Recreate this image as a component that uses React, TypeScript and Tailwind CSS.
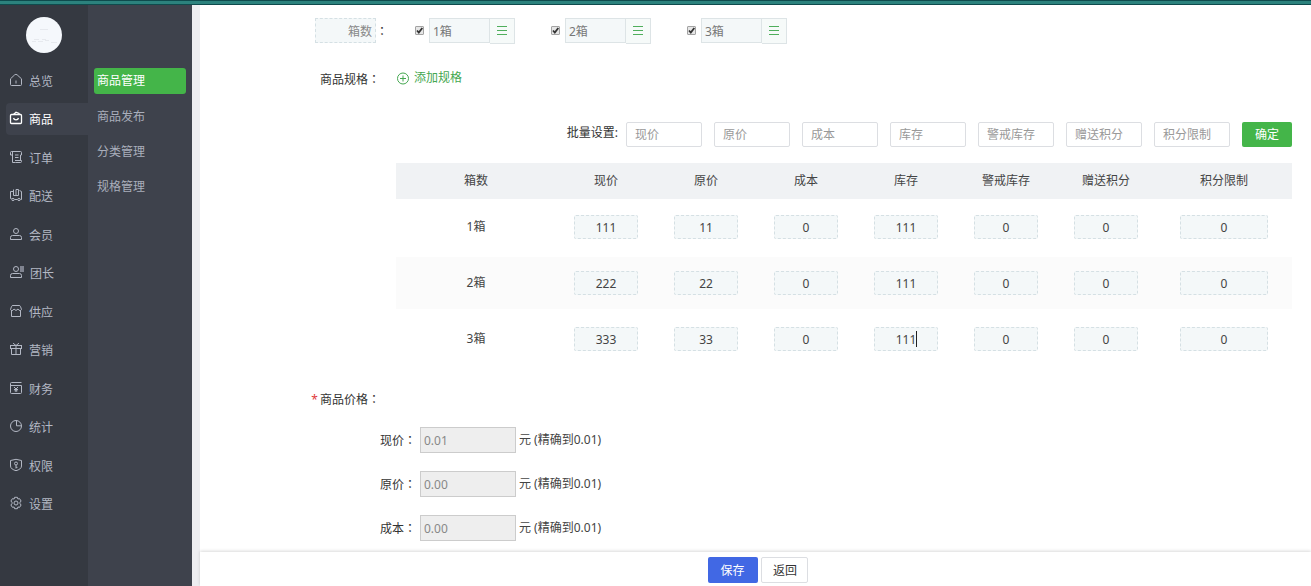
import React, { useState } from "react";

const icons: Record<string, React.ReactNode> = {
  home: (
    <>
      <path d="M2.5 12.5h9a1 1 0 0 0 1-1V5.8L8.2 1.9a2 2 0 0 0-2.6 0L1.5 5.8v5.7a1 1 0 0 0 1 1z" />
      <path d="M7 7.5v3" />
    </>
  ),
  goods: (
    <>
      <path strokeWidth="1.3" d="M4.5 3.5 7 1.2l3 1.2v1.1" />
      <rect strokeWidth="1.3" x="1.5" y="3.5" width="11" height="9" rx="1" />
      <path strokeWidth="1.3" d="M4.5 7c.6 2.4 4.4 2.4 5 0" />
    </>
  ),
  order: (
    <>
      <path d="M3.5 5h-2V2.500a1 1 0 0 1 1-1h9a1 1 0 0 1 1 1V5h-1M3.500 1.500v11h3M6 5h3.500M6 7.500h3.500" />
      <path d="M6 10.500h6.500v1a1 1 0 0 1-1 1h-5M11.500 5v5.500" />
    </>
  ),
  delivery: (
    <>
      <path d="M4.500 3.500h-3v7h1M5.500 11.500h3M11.500 11.500h1v-8l-2-1" />
      <path d="M4.500 1.500v6h5v-6M7 1.500v6M7 1.500h2.500" />
      <circle cx="4" cy="11.5" r="1.2" />
      <circle cx="10" cy="11.5" r="1.2" />
    </>
  ),
  member: (
    <>
      <circle cx="7" cy="4" r="2.5" />
      <path d="M1.5 12.5v-2a2 2 0 0 1 2-2h7a2 2 0 0 1 2 2v2z" />
    </>
  ),
  leader: (
    <>
      <circle cx="7" cy="4" r="2.5" />
      <path d="M1.5 12.5v-2a2 2 0 0 1 2-2h7a2 2 0 0 1 2 2v2z" />
      <rect x="11" y="1" width="4" height="6" fill="currentColor" fillOpacity="0.6" stroke="none" />
    </>
  ),
  supply: (
    <>
      <path d="M2.500 6.500v6h9v-6M1.500 5.500l1-3a1.500 1.500 0 0 1 1.500-1h6a1.500 1.500 0 0 1 1.500 1l1 3" />
      <path d="M1.500 5.500c.5 1.500 2.500 1.500 3.500-.5l2 1.500L9 5c1 2 3 2 3.500.5" />
    </>
  ),
  gift: (
    <>
      <rect x="1.5" y="3.5" width="11" height="3" />
      <path d="M2.5 6.5v6h9v-6M7 3.5v9M4 1.2l3 2.3 3-2.3" />
    </>
  ),
  finance: (
    <>
      <path d="M12.5 1.5h-10a1 1 0 0 0-1 1v9a1 1 0 0 0 1 1h9a1 1 0 0 0 1-1v-7h-11" />
      <path d="M5 6l2 2 2-2M5 8.5h4M7 8v3M5.5 9.8h3" />
    </>
  ),
  stats: (
    <>
      <circle cx="7" cy="7" r="5.5" />
      <path d="M7.5 1.5v5.3h5" />
    </>
  ),
  auth: (
    <>
      <path d="M1.5 2.5 7 1.3l5.5 1.2V8c0 2.5-2.5 3.8-5.5 4.7C4 11.8 1.5 10.5 1.5 8z" />
      <circle cx="7" cy="5.5" r="1.5" />
      <path d="M7 7v3.5M7 9.3h1.5" />
    </>
  ),
  setting: (
    <>
      <path d="M5.6 1.3h2.8l.5 1.7 1.7-.3 1.5 2.3L11 6.4v1.2L12.1 9l-1.5 2.3-1.7-.3-.5 1.7H5.6L5.1 11l-1.7.3L1.9 9 3 7.6V6.4L1.9 5l1.5-2.3 1.7.3z" />
      <circle cx="7" cy="7" r="2" />
    </>
  ),
};

const menu = [
  { icon: "home", label: "总览" },
  { icon: "goods", label: "商品" },
  { icon: "order", label: "订单" },
  { icon: "delivery", label: "配送" },
  { icon: "member", label: "会员" },
  { icon: "leader", label: "团长" },
  { icon: "supply", label: "供应" },
  { icon: "gift", label: "营销" },
  { icon: "finance", label: "财务" },
  { icon: "stats", label: "统计" },
  { icon: "auth", label: "权限" },
  { icon: "setting", label: "设置" },
];

const subMenu = ["商品管理", "商品发布", "分类管理", "规格管理"];

const fields = ["现价", "原价", "成本", "库存", "警戒库存", "赠送积分", "积分限制"];

const initialRows = [
  { name: "1箱", values: ["111", "11", "0", "111", "0", "0", "0"] },
  { name: "2箱", values: ["222", "22", "0", "111", "0", "0", "0"] },
  { name: "3箱", values: ["333", "33", "0", "111", "0", "0", "0"] },
];

const prices = [
  { label: "现价", value: "0.01" },
  { label: "原价", value: "0.00" },
  { label: "成本", value: "0.00" },
];

// ortalanmış iki nokta için JP fontu
function Colon() {
  return <span className="font-['Noto_Sans_CJK_JP',sans-serif]">：</span>;
}

function SpecItem({ name }: { name: string }) {
  return (
    <div className="flex items-start">
      <span className="relative mt-2 mr-[5px] block h-[9px] w-[9px]">
        <input
          type="checkbox"
          defaultChecked
          aria-label={name}
          className="peer block h-[9px] w-[9px] appearance-none rounded-[1px] border border-[#a3a3a3] bg-[#e6e6e6]"
        />
        <svg
          viewBox="0 0 9 9"
          className="pointer-events-none absolute inset-0 hidden h-[9px] w-[9px] peer-checked:block"
          fill="none"
          stroke="#333"
          strokeWidth="1.8"
        >
          <path d="M2 4.5l1.8 2L7.3 2" />
        </svg>
      </span>
      <input
        defaultValue={name}
        aria-label="规格名称"
        className="h-[25px] w-[61px] border border-[#dde4e6] bg-[#f4f8f9] px-[3px] text-[#777] outline-none"
      />
      <button
        aria-label="拖动排序"
        className="flex h-[26px] w-[25px] items-center justify-center border border-l-0 border-[#dde4e6] bg-[#f6faf9]"
      >
        <svg className="h-3 w-3" viewBox="0 0 12 12" stroke="#4fae5c" strokeWidth="1">
          <path d="M1 1.5h10M1 5.5h10M1 9.5h10" />
        </svg>
      </button>
    </div>
  );
}

export default function App() {
  const [rows, setRows] = useState(initialRows);

  const updateCell = (r: number, c: number, value: string) => {
    setRows(rows.map((row, i) => (i === r ? { ...row, values: row.values.map((v, j) => (j === c ? value : v)) } : row)));
  };

  return (
    <div className="flex h-screen flex-col bg-white font-['Noto_Sans','Noto_Sans_CJK_SC',sans-serif] text-xs leading-5 text-[#333]">
      <div className="h-[5px] shrink-0 border-t border-b border-[#0f4b4d] bg-[#2c827d]" />

      <div className="flex min-h-0 flex-1">
        {/* Ana menü */}
        <nav className="w-[88px] shrink-0 bg-[#353941] pt-3">
          <div className="mx-auto h-9 w-9 rounded-full bg-[#f5f8fc]">
            <svg viewBox="0 0 36 36" className="h-9 w-9" stroke="#e6e9ee" fill="none">
              <path d="M14 12.5h8M6 24.5h4m2 0h5m2-1h4m2 2h6M8 22.5h5m3 0h4" />
            </svg>
          </div>
          <div className="mt-3 flex h-[455px] flex-col justify-between">
            {menu.map((item) => (
              <a
                key={item.label}
                href="#"
                className={
                  item.label === "商品"
                    ? "ml-1.5 flex h-8 items-center gap-1.5 rounded-l bg-[#3e424c] pt-0.5 pl-[3px] text-white"
                    : "ml-1.5 flex h-8 items-center gap-1.5 pt-0.5 pl-[3px] text-[#b3b8c4]"
                }
              >
                <svg
                  viewBox={item.icon === "leader" ? "0 0 15 14" : "0 0 14 14"}
                  className={item.icon === "leader" ? "mb-1 h-3.5 w-[15px]" : "mb-1 h-3.5 w-3.5"}
                  fill="none"
                  stroke="currentColor"
                  strokeWidth="1"
                >
                  {icons[item.icon]}
                </svg>
                {item.label}
              </a>
            ))}
          </div>
        </nav>

        {/* Alt menü */}
        <nav className="flex w-[104px] shrink-0 flex-col gap-[9px] bg-[#3e424c] px-1.5 pt-[63px]">
          {subMenu.map((label, i) => (
            <a
              key={label}
              href="#"
              className={
                i === 0
                  ? "flex h-[26px] items-center rounded-[3px] bg-[#44b549] pl-[3px] text-white"
                  : "flex h-[26px] items-center pt-0.5 pl-[3px] text-[#a9aebb]"
              }
            >
              {label}
            </a>
          ))}
        </nav>

        <div className="w-2 shrink-0 bg-[#ededf0]" />

        <div className="flex min-w-0 flex-1 flex-col">
          <main className="min-h-0 flex-1 overflow-y-auto pt-[13px]">
            <div className="flex pl-[115px]">
              <input
                defaultValue="箱数"
                aria-label="规格"
                className="h-[25px] w-[61px] border border-dashed border-[#d5e0e4] bg-[#f4f8f9] px-[3px] text-right text-[#888] outline-none"
              />
              <span className="w-[39px] pt-[3px]">
                <Colon />
              </span>
              <div className="flex gap-9">
                {rows.map((row) => (
                  <SpecItem key={row.name} name={row.name} />
                ))}
              </div>
            </div>

            <div className="mt-6 flex h-5 items-center gap-4">
              <span className="w-[180px] pt-0.5 text-right">
                商品规格
                <Colon />
              </span>
              <button className="flex items-center gap-1 text-[#44a750]">
                <svg className="h-3.5 w-3.5" viewBox="0 0 14 14" fill="none" stroke="currentColor" strokeWidth="1">
                  <circle cx="7" cy="7.5" r="5.5" />
                  <path d="M4 7.5h6M7 4.5v6" />
                </svg>
                添加规格
              </button>
            </div>

            <div className="mt-[34px] mr-[19px] ml-[196px] flex justify-end gap-3">
              <span className="-mr-1 pt-px text-[#333]">批量设置:</span>
              {fields.map((field) => (
                <input
                  key={field}
                  placeholder={field}
                  aria-label={field}
                  className="h-[25px] w-[76px] rounded-xs border border-[#dcdee2] bg-white px-2 text-[#333] outline-none placeholder:text-[#999]"
                />
              ))}
              <button className="h-[25px] w-[50px] rounded-xs bg-[#44b549] text-white">确定</button>
            </div>

            {/* Fiyat ve stok tablosu */}
            <div className="mt-4 mr-[19px] ml-[196px]">
              <table className="w-full table-fixed border-separate border-spacing-0 text-center">
                <colgroup>
                  <col className="w-[160px]" />
                  {fields.slice(0, 6).map((field) => (
                    <col key={field} className="w-[100px]" />
                  ))}
                  <col />
                </colgroup>
                <thead>
                  <tr className="h-9 bg-[#f0f2f4] text-[#444]">
                    <th className="font-normal">箱数</th>
                    {fields.map((field) => (
                      <th key={field} className="font-normal">
                        {field}
                      </th>
                    ))}
                  </tr>
                </thead>
                <tbody>
                  {rows.map((row, r) => (
                    <tr key={row.name} className="h-14 text-[#444]">
                      <td className={r % 2 ? "border-y-2 border-white bg-[#fbfbfb]" : ""}>{row.name}</td>
                      {row.values.map((value, c) => (
                        <td key={c} className={r % 2 ? "border-y-2 border-white bg-[#fbfbfb]" : ""}>
                          <span className="relative inline-block align-middle">
                            <input
                              value={value}
                              onChange={(e) => updateCell(r, c, e.target.value)}
                              aria-label={row.name + fields[c]}
                              className={
                                c === 6
                                  ? "block h-6 w-[88px] rounded-xs border border-dashed border-[#d5e0e4] bg-[#f4f8f9] text-center text-[#444] outline-none"
                                  : "block h-6 w-16 rounded-xs border border-dashed border-[#d5e0e4] bg-[#f4f8f9] text-center text-[#444] outline-none"
                              }
                            />
                            {r === 2 && c === 3 && <span className="absolute top-1 left-[42px] h-4 w-px bg-[#222]" />}
                          </span>
                        </td>
                      ))}
                    </tr>
                  ))}
                </tbody>
              </table>
            </div>

            <div className="mt-[22px] w-[180px] text-right">
              <span className="mr-0.5 text-[#e03c3c]">*</span>
              商品价格
              <Colon />
            </div>
            <div className="mt-[17px] flex flex-col gap-[18px]">
              {prices.map((price) => (
                <div key={price.label} className="flex h-[26px] items-center">
                  <label htmlFor={price.label} className="w-[216px] text-right">
                    {price.label}
                    <Colon />
                  </label>
                  <input
                    id={price.label}
                    defaultValue={price.value}
                    disabled
                    className="mr-[3px] ml-1 h-[26px] w-24 border border-[#ccc] bg-[#eee] px-[3px] text-[#888]"
                  />
                  <span className="text-[#444]">元 (精确到0.01)</span>
                </div>
              ))}
            </div>
          </main>

          <footer className="flex h-[34px] shrink-0 items-center justify-center gap-[3px] bg-white pt-0.5 pl-1 shadow-[0_-1px_3px_rgba(0,0,0,0.15)]">
            <button className="h-[26px] w-[50px] rounded-xs bg-[#4168e4] pt-0.5 text-white">保存</button>
            <button className="h-[26px] w-[47px] rounded-xs border border-[#dcdee2] bg-white pt-0.5 pl-0.5">返回</button>
          </footer>
        </div>
      </div>
    </div>
  );
}
